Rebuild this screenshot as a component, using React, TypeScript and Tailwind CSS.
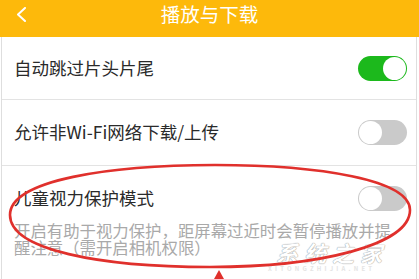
import React from "react";

function Toggle({ on }: { on: boolean }) {
  if (on) {
    return (
      <div className="w-[49px] h-[25px] rounded-full bg-[#1cb91c] flex items-center justify-end pr-[1px]">
        <div className="w-[23px] h-[23px] rounded-full bg-white" />
      </div>
    );
  }
  return (
    <div className="w-[49px] h-[25px] rounded-full bg-[#cacaca] flex items-center justify-start pl-[1px]">
      <div className="w-[23px] h-[23px] rounded-full bg-white" />
    </div>
  );
}

export default function App() {
  return (
    <div
      className="relative w-[419px] h-[279px] overflow-hidden bg-white"
      style={{ fontFamily: '"Noto Sans CJK SC", "Noto Sans", sans-serif' }}
    >
      <div className="h-[37px] bg-[#fdb90b] grid grid-cols-[1fr_auto_1fr] items-start">
        <div className="pl-[16px] pt-[7px]">
          <svg width="11" height="15" viewBox="0 0 11 15">
            <path d="M9 1 L2 7.5 L9 14" fill="none" stroke="white" strokeWidth="2" strokeLinecap="round" strokeLinejoin="round" />
          </svg>
        </div>
        <div className="text-white text-[19.5px] leading-[28px] pt-0">播放与下载</div>
        <div />
      </div>
      <div className="ml-[1px] w-[416px] h-[242px] border-x border-[#dedede]">
        <div className="h-[63px] flex items-center justify-between pl-[12px] pr-[9px] border-b border-[#e3e3e3]">
          <span className="text-[17.5px] text-[#2a2a2a]">自动跳过片头片尾</span>
          <Toggle on />
        </div>
        <div className="h-[66px] flex items-center justify-between pl-[12px] pr-[9px] border-b border-[#e3e3e3]">
          <span className="text-[17.5px] text-[#2a2a2a]">允许非Wi-Fi网络下载/上传</span>
          <Toggle on={false} />
        </div>
        <div className="pt-[20px] pl-[12px] pr-[9px]">
          <div className="flex items-center justify-between h-[24px]">
            <span className="text-[17.5px] text-[#2a2a2a]">儿童视力保护模式</span>
            <Toggle on={false} />
          </div>
          <div className="mt-[12px] w-[385px] text-[16.4px] leading-[17px] text-[#a9a9a9]">
            开启有助于视力保护，距屏幕过近时会暂停播放并提醒注意（需开启相机权限）
          </div>
        </div>
      </div>

      <div className="absolute left-[276px] top-[241px] text-[22px] font-bold italic text-white leading-none [text-shadow:0_0_1px_#9a9a9a,0_0_1px_#9a9a9a] tracking-[6px]">
        系统之家
      </div>
      <div className="absolute left-[268px] top-[266px] text-[6px] text-[#e4e4e4] tracking-[3.2px] leading-none font-bold">
        XITONGZHIJIA.NET
      </div>

      <svg className="absolute left-0 top-0" width="419" height="279" viewBox="0 0 419 279">
        <path
          d="M10 215 C10 180 110 165 215 165 C320 165 410 180 410 210 C410 245 320 267 210 267 C100 267 10 250 10 215 Z"
          fill="none"
          stroke="#e0302c"
          strokeWidth="2.6"
        />
        <path d="M219 270 L214 279 L224 279 Z" fill="#e0302c" />
      </svg>
    </div>
  );
}
